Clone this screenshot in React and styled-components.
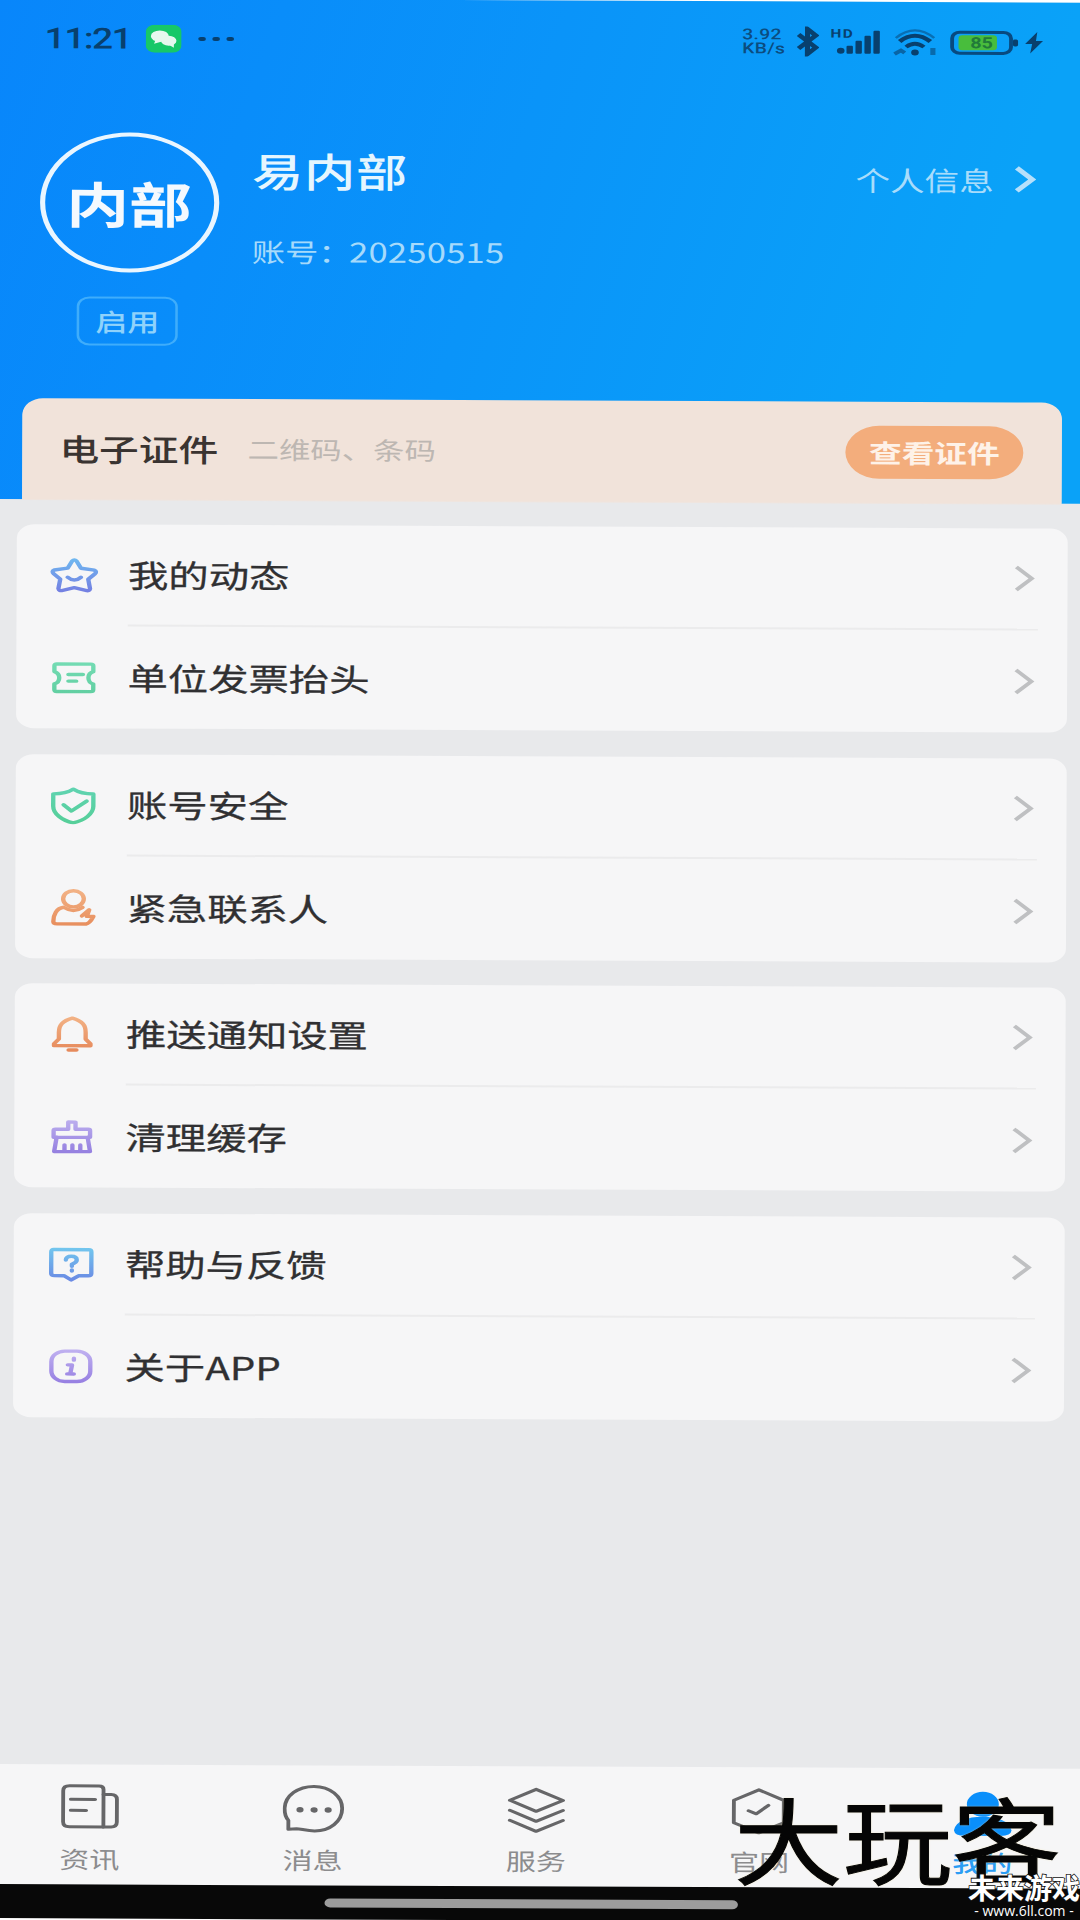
import styled, { createGlobalStyle, css } from "styled-components";

const menuGroups = [
  [
    { id: 1, text: "我的动态", icon: "star", from: "#6fb7f0", to: "#7480e2" },
    { id: 2, text: "单位发票抬头", icon: "ticket", from: "#74dcb4", to: "#62cfa2" },
  ],
  [
    { id: 3, text: "账号安全", icon: "shield", from: "#5fd3b0", to: "#56cf9a" },
    { id: 4, text: "紧急联系人", icon: "contact", from: "#f2b184", to: "#e89060" },
  ],
  [
    { id: 5, text: "推送通知设置", icon: "bell", from: "#f2b184", to: "#e68a5c" },
    { id: 6, text: "清理缓存", icon: "broom", from: "#bcaeee", to: "#9580e0" },
  ],
  [
    { id: 7, text: "帮助与反馈", icon: "help", from: "#72c6ee", to: "#6a8ae4" },
    { id: 8, text: "关于APP", icon: "info", from: "#bfb0f0", to: "#9780e2" },
  ],
];

const tabs = [
  { id: 1, text: "资讯", icon: "news" },
  { id: 2, text: "消息", icon: "message" },
  { id: 3, text: "服务", icon: "layers" },
  { id: 4, text: "官网", icon: "site" },
  { id: 5, text: "我的", icon: "me", active: true },
];

const menuPaths = {
  star: (
    <>
      <path d="M18.2 5 Q20 2.5 21.8 5 L25.5 12.5 L36.5 14.5 Q39 16 36.8 18.5 L31.5 24 L33 34 Q32.5 37 29.5 35.8 L20 33 L10.5 35.8 Q7.5 37 7 34 L8.5 24 L3.2 18.5 Q1 16 3.5 14.5 L14.5 12.5 Z" />
      <path d="M14.5 22 Q20 28 25.5 22" />
    </>
  ),
  ticket: (
    <>
      <path d="M6 6 H34 Q36 6 36 8 V14 Q32 15.5 32 20.5 Q32 25.5 36 27 V33 Q36 35 34 35 H6 Q4 35 4 33 V27 Q8 25.5 8 20.5 Q8 15.5 4 14 V8 Q4 6 6 6 Z" />
      <path d="M15.5 17 H27.5 M15.5 24 H22" />
    </>
  ),
  shield: (
    <>
      <path d="M20 3 C25 7 31 8 36.5 8 V21 C36.5 29 29 36 20 38.5 C11 36 3.5 29 3.5 21 V8 C9 8 15 7 20 3 Z" />
      <path d="M12 19.5 L18.5 26 L31 15.5" />
    </>
  ),
  contact: (
    <>
      <ellipse cx="20.5" cy="11" rx="8.5" ry="8.5" />
      <path d="M12.5 20 C6.5 21 4 28 4 35 Q4 37.5 7 37.5 H31 Q34 37 37 29.5 H31.5 L33.5 22.5 L27.5 29 M12.5 20 Q20.5 26.5 28 20" />
    </>
  ),
  bell: (
    <>
      <path d="M20 3 C12 6 9 10 9 18 V25 L5 30 V32 H35 V30 L31 25 V18 C31 10 28 6 20 3 Z" />
      <path d="M17 36.5 H23.5" />
    </>
  ),
  broom: (
    <>
      <path d="M17 12.5 V5 H23 V12.5 H33.5 Q35 12.5 35 14 V21 H5 V14 Q5 12.5 6.5 12.5 Z" />
      <path d="M7.5 21 L5.5 36 H35 L33 21 M14 29 V35 M20.5 29 V35 M27 29 V35" />
    </>
  ),
  help: (
    <>
      <path d="M5.5 4.5 H34.5 Q36.5 4.5 36.5 7 V29.5 Q36.5 32 34 32 H26 L20 36.5 L14 32 H6 Q3.5 32 3.5 29.5 V7 Q3.5 4.5 5.5 4.5 Z" />
      <path d="M15.5 15.5 Q15.5 11.5 20 11.5 Q24.5 11.5 24.5 15.5 Q24.5 18 20.5 20 V22 M20.5 26 V27" />
    </>
  ),
  info: (
    <>
      <rect x="4" y="4" width="32" height="32" rx="11" />
      <path d="M22.5 11.5 V13.5 M17.5 18.5 H21 L19.5 28 M17 28 H22.5" />
    </>
  ),
};

const tabPaths = {
  news: (
    <>
      <path d="M8.5 3.5 H31.5 Q35 3.5 35 7 V44.5 H8.5 Q3.5 44.5 3.5 39.5 V8.5 Q3.5 3.5 8.5 3.5 Z" />
      <path d="M35 12 H41 Q45.5 12 45.5 17 V39.5 Q45.5 44.5 41 44.5 H35 M9.5 17 H28.5 M9.5 28 H21.5" />
    </>
  ),
  message: (
    <>
      <path d="M4.5 46 V37 C1.5 33 1.5 28 1.5 25 C2 12 12 3 24.5 3 C37 3 46.5 13 46.5 25 C46.5 38 37 47.5 25 47.5 C19 47.5 14 45.5 11 45.5 Z" />
      <path d="M13.5 26.5 h.1 M24.5 26.5 h.1 M35.5 26.5 h.1" strokeWidth="5.5" />
    </>
  ),
  layers: (
    <>
      <path d="M24 5 L45 16 L24 27 L3.5 16 Z" />
      <path d="M3.5 26 L24 37 L45 26 M3.5 36 L24 47 L45 36" />
    </>
  ),
  site: (
    <>
      <path d="M24 4.5 L43.5 15 V37.5 L24 47.5 L4.5 37.5 V15 Z" />
      <path d="M16 25.5 L22 28.5 L31.5 20" />
    </>
  ),
  me: (
    <>
      <circle cx="24" cy="18" r="12.5" fill="#0a8ffb" stroke="none" />
      <path d="M1.5 44 C3 35 12 30.5 24 30.5 C36 30.5 45 35 46.5 44 Q46 49.5 38 49.5 H10 Q2 49.5 1.5 44 Z" fill="#0a8ffb" stroke="none" />
    </>
  ),
};

function MenuIcon({ name, from, to }) {
  return (
    <MenuSvg viewBox="0 0 40 40" stroke={`url(#grad-${name})`}>
      <defs>
        <linearGradient id={`grad-${name}`} gradientUnits="userSpaceOnUse" x1="0" y1="3" x2="0" y2="37">
          <stop offset="0" stopColor={from} />
          <stop offset="1" stopColor={to} />
        </linearGradient>
      </defs>
      {menuPaths[name]}
    </MenuSvg>
  );
}

function Chevron({ color, width }) {
  return (
    <ChevronSvg viewBox="0 0 18 28" stroke={color} strokeWidth={width}>
      <path d="M3 2.5 L15 14 L3 25.5" />
    </ChevronSvg>
  );
}

function StatusIcons() {
  return (
    <StatusRight>
      <Speed>
        <span>3.92</span>
        <span>KB/s</span>
      </Speed>
      <StatusSvg $width={18} $left={8} viewBox="0 0 18 30">
        <path d="M2 8 L15.5 21 L9 27.5 V2.5 L15.5 9 L2 22" fill="none" stroke="#08406e" strokeWidth="4" />
      </StatusSvg>
      <Signal>
        <HdMark>HD</HdMark>
        <StatusSvg $width={39} viewBox="0 0 39 30">
          <g fill="#08406e">
            <circle cx="8" cy="24" r="3" />
            <rect x="12.5" y="19" width="5" height="8" rx="1" />
            <rect x="19.5" y="14" width="5" height="13" rx="1" />
            <rect x="26.5" y="9" width="5" height="18" rx="1" />
            <rect x="33.5" y="4" width="5" height="23" rx="1" />
          </g>
        </StatusSvg>
      </Signal>
      <StatusSvg $width={34} $left={10} viewBox="0 0 34 30">
        <g fill="none" stroke="#08406e">
          <path d="M2 11 Q17 -4 32 11" strokeWidth="2.2" opacity=".5" />
          <path d="M5 14.5 Q17 3 29 14.5" strokeWidth="4" />
          <path d="M10 20 Q17 13.5 24 20" strokeWidth="3.6" />
          <path d="M1 27 L6 23.5 L9 26" strokeWidth="3.6" opacity=".6" />
          <path d="M31 21 V28" strokeWidth="4" opacity=".55" />
        </g>
        <circle cx="17" cy="25.5" r="3" fill="#08406e" />
      </StatusSvg>
      <StatusSvg $width={56} $left={10} viewBox="0 0 56 30">
        <rect x="2" y="5" width="46" height="21" rx="6" fill="none" stroke="#084a80" strokeWidth="3" />
        <rect x="7" y="8" width="30" height="15" rx="3" fill="#48bd3c" />
        <text x="25" y="21" textAnchor="middle" fontSize="15.5" fontWeight="700" fontFamily="Roboto, sans-serif" fill="#217b39">
          85
        </text>
        <rect x="49.5" y="12" width="4" height="7" rx="1.5" fill="#08406e" />
      </StatusSvg>
      <StatusSvg $width={14} $left={3} viewBox="0 0 14 30">
        <path d="M9.5 4.5 L0 16.5 H5.5 L4 26 L14 13.5 H8.5 Z" fill="#08406e" />
      </StatusSvg>
    </StatusRight>
  );
}

function App() {
  return (
    <Viewport>
      <GlobalStyle />
      <Screen>
        <Header>
          <StatusBar>
            <Time>11:21</Time>
            <WechatSvg viewBox="0 0 28 28">
              <rect width="28" height="28" rx="7" fill="#17c868" />
              <ellipse cx="11" cy="11.5" rx="7" ry="5.8" fill="#e6f8ee" />
              <ellipse cx="18" cy="16" rx="6" ry="5" fill="#e6f8ee" />
              <path d="M6.5 19 L8 14 L12 17 Z M22 23 L18 20 L22 18 Z" fill="#e6f8ee" />
            </WechatSvg>
            <Dots>
              <i />
              <i />
              <i />
            </Dots>
            <StatusIcons />
          </StatusBar>

          <Profile>
            <AvatarCol>
              <Avatar>内部</Avatar>
              <Badge>启用</Badge>
            </AvatarCol>
            <UserInfo>
              <Name>易内部</Name>
              <Account>
                账号：<AccountNo>20250515</AccountNo>
              </Account>
            </UserInfo>
            <InfoLink>
              个人信息
              <Chevron color="#b5e0fb" width={4.4} />
            </InfoLink>
          </Profile>

          <CertCard>
            <CertTitle>电子证件</CertTitle>
            <CertSub>二维码、条码</CertSub>
            <CertBtn>查看证件</CertBtn>
          </CertCard>
        </Header>

        <Main>
          {menuGroups.map((group, i) => (
            <Group key={i}>
              {group.map((item) => (
                <Row key={item.id}>
                  <MenuIcon name={item.icon} from={item.from} to={item.to} />
                  <RowBody>
                    <RowText>{item.text}</RowText>
                    <Chevron color="#bfc0c2" width={3.4} />
                  </RowBody>
                </Row>
              ))}
            </Group>
          ))}
        </Main>

        <TabBar>
          {tabs.map((tab) => (
            <Tab key={tab.id} $active={tab.active}>
              <TabSvg viewBox="0 0 48 52">{tabPaths[tab.icon]}</TabSvg>
              {tab.text}
            </Tab>
          ))}
        </TabBar>
        <HomeBar>
          <Indicator />
        </HomeBar>
      </Screen>

      <BrushMark>大玩客</BrushMark>
      <SiteMark>
        <SiteName>未来游戏</SiteName>
        <SiteUrl>- www.6ll.com -</SiteUrl>
      </SiteMark>
    </Viewport>
  );
}

const GlobalStyle = createGlobalStyle`
  * {
    box-sizing: border-box;
  }
  body {
    margin: 0;
    background-color: #fff;
    font-family: "Noto Sans CJK SC", "Noto Sans", sans-serif;
  }
`;

const Viewport = styled.div`
  position: relative;
  width: 1080px;
  height: 1920px;
  overflow: hidden;
`;

/* the phone screen is wider than its own pixels and leans a little */
const Screen = styled.div`
  width: 862px;
  height: 1920px;
  display: flex;
  flex-direction: column;
  background-color: #e8e9eb;
  transform: translateY(-2px) rotate(0.25deg) scaleX(1.28);
  transform-origin: 0 0;
`;

const Header = styled.header`
  height: 501px;
  display: flex;
  flex-direction: column;
  padding-right: 18px;
  background: linear-gradient(105deg, #0886fb 0%, #0a94f9 45%, #0aa2f8 85%);
`;

const StatusBar = styled.div`
  height: 80px;
  display: flex;
  align-items: center;
  padding: 0 29px 0 35px;
`;

const Time = styled.span`
  width: 64px;
  font-family: Roboto, sans-serif;
  font-size: 29px;
  font-weight: 500;
  letter-spacing: -1.2px;
  color: #08406e;
`;

const WechatSvg = styled.svg`
  width: 28px;
  height: 28px;
  margin-left: 15px;
`;

const Dots = styled.div`
  display: flex;
  gap: 5px;
  margin-left: 13px;
  i {
    width: 6px;
    height: 4px;
    border-radius: 2px;
    background-color: #08406e;
  }
`;

const StatusRight = styled.div`
  display: flex;
  align-items: center;
  margin-left: auto;
`;

const Speed = styled.div`
  display: flex;
  flex-direction: column;
  width: 34px;
  font-family: Roboto, sans-serif;
  font-size: 15px;
  font-weight: 500;
  line-height: 14px;
  letter-spacing: 0.3px;
  color: #0b4c80;
`;

const StatusSvg = styled.svg`
  width: ${(props) => props.$width}px;
  height: 30px;
  margin-left: ${(props) => props.$left || 0}px;
`;

const Signal = styled.div`
  position: relative;
  display: flex;
  margin-left: 9px;
`;

const HdMark = styled.span`
  position: absolute;
  top: 2px;
  left: 0;
  font-family: Roboto, sans-serif;
  font-size: 12px;
  font-weight: 700;
  line-height: 11px;
  letter-spacing: 1px;
  color: #08406e;
`;

const Profile = styled.section`
  height: 320px;
  display: flex;
  padding: 54px 34px 0 31.5px;
`;

const AvatarCol = styled.div`
  width: 140px;
  display: flex;
  flex-direction: column;
  align-items: center;
`;

const Avatar = styled.div`
  width: 140px;
  height: 140px;
  border: 4px solid #eaf6ff;
  border-radius: 50%;
  font-size: 49px;
  font-weight: 700;
  line-height: 131px;
  text-align: center;
  color: #f4f9fe;
`;

const Badge = styled.span`
  width: 79px;
  height: 49px;
  margin: 24px 2px 0 0;
  border: 2px solid #3fadfb;
  border-radius: 10px;
  font-size: 25px;
  font-weight: 500;
  line-height: 45px;
  text-align: center;
  color: #8fd2fb;
`;

const UserInfo = styled.div`
  display: flex;
  flex-direction: column;
  margin-left: 26px;
`;

const Name = styled.strong`
  margin-top: 8px;
  font-size: 40px;
  font-weight: 500;
  line-height: 58px;
  letter-spacing: 0.6px;
  color: #e6f6fe;
`;

const Account = styled.span`
  margin-top: 32px;
  font-size: 26px;
  line-height: 40px;
  color: #a6dafb;
`;

const AccountNo = styled.span`
  margin-left: -2px;
  font-size: 27px;
  letter-spacing: 0.2px;
`;

const InfoLink = styled.a`
  height: 40px;
  display: flex;
  align-items: center;
  gap: 15px;
  margin: 23px 0 0 auto;
  font-size: 27px;
  color: #a8dcfb;
`;

const CertCard = styled.section`
  width: 812px;
  height: 101px;
  flex-shrink: 0;
  display: flex;
  align-items: center;
  margin-left: 19px;
  padding: 0 30px 0 29px;
  border-radius: 16px 16px 0 0;
  background-color: #f1e3da;
  box-shadow: 0 1px 0 #efe5df;
`;

const CertTitle = styled.h2`
  margin: 0 0 2px;
  font-size: 31px;
  font-weight: 500;
  color: #3a3431;
`;

const CertSub = styled.span`
  margin: 0 0 2px 23px;
  font-size: 24.5px;
  color: #bdb7b2;
`;

const CertBtn = styled.button`
  width: 139px;
  height: 53px;
  margin: 0 0 1px auto;
  padding: 0 0 2px;
  border: none;
  border-radius: 27px;
  background-color: #f3ad7c;
  font-family: inherit;
  font-size: 25.5px;
  font-weight: 700;
  color: #fef2e8;
`;

const Main = styled.main`
  flex: 1;
  display: flex;
  flex-direction: column;
  gap: 25.6px;
  padding: 25px 26px 0 15px;
`;

const Group = styled.ul`
  height: 204px;
  margin: 0;
  padding: 0 23px 0 26px;
  border-radius: 14px;
  background-color: #f6f6f7;
  list-style: none;
`;

const RowBody = styled.div`
  flex: 1;
  height: 102px;
  display: flex;
  justify-content: space-between;
  align-items: center;
  margin-left: 23px;
  padding-right: 2px;
`;

const RowText = styled.span`
  margin-bottom: 2px;
  font-size: 31.5px;
  color: #303032;
  -webkit-text-stroke: 0.3px #303032;
`;

const Row = styled.li`
  height: 102px;
  display: flex;
  align-items: center;

  &:first-child ${RowBody} {
    border-bottom: 2px solid #ebebec;
  }
`;

const MenuSvg = styled.svg`
  width: 38px;
  height: 38px;
  fill: none;
  stroke-width: 3.6;
  stroke-linejoin: round;
  stroke-linecap: round;
`;

const ChevronSvg = styled.svg`
  width: 18px;
  height: 28px;
  fill: none;
`;

const TabBar = styled.nav`
  height: 120px;
  display: flex;
  overflow: hidden;
  background-color: #f6f6f7;
`;

const Tab = styled.a`
  flex: 0 0 174.4px;
  display: flex;
  flex-direction: column;
  align-items: center;
  padding-top: 18px;
  font-size: 23.5px;
  line-height: 34px;
  color: #8c8c8e;

  &:first-child {
    margin-left: -11px;
  }
  ${(props) =>
    props.$active &&
    css`
      font-weight: 500;
      color: #2a9df4;
    `}
`;

const TabSvg = styled.svg`
  width: 48px;
  height: 52px;
  margin-bottom: 7px;
  fill: none;
  stroke: #666668;
  stroke-width: 3;
  stroke-linejoin: round;
  stroke-linecap: round;
`;

const HomeBar = styled.footer`
  height: 34px;
  padding: 13px 0 0 260px;
  background-color: #080808;
`;

const Indicator = styled.div`
  width: 323px;
  height: 9px;
  border-radius: 5px;
  background-color: #9c9c9c;
`;

const BrushMark = styled.span`
  position: absolute;
  top: 1767px;
  left: 734px;
  font-size: 94px;
  font-weight: 400;
  line-height: 140px;
  white-space: nowrap;
  color: #050505;
  transform: scaleX(1.16);
  transform-origin: 0 0;
  -webkit-text-stroke: 1px #050505;
  text-shadow: 0 0 2px #efe3b4;
`;

const SiteMark = styled.div`
  position: absolute;
  right: 0;
  bottom: 0;
  width: 112px;
  display: flex;
  flex-direction: column;
  align-items: center;
  color: #fff;
`;

const SiteName = styled.strong`
  font-size: 28px;
  font-weight: 700;
  line-height: 30px;
  white-space: nowrap;
  paint-order: stroke fill;
  -webkit-text-stroke: 1.6px #111;
`;

const SiteUrl = styled.span`
  font-family: "Open Sans", sans-serif;
  font-size: 14px;
  line-height: 18px;
  white-space: nowrap;
`;

export default App;
